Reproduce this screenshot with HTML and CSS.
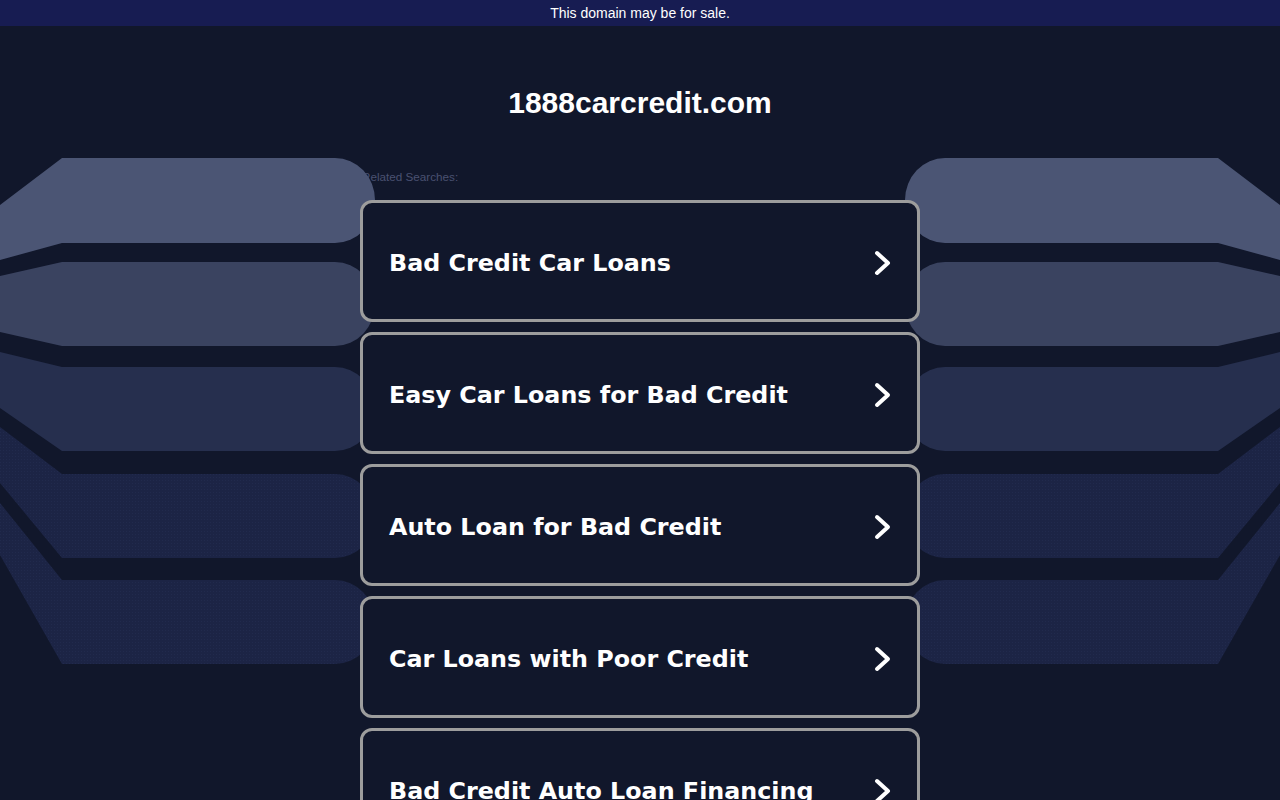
FILE: index.html
```html
<!DOCTYPE html>
<html lang="en">
<head>
<meta charset="utf-8">
<title>1888carcredit.com</title>
<link rel="stylesheet" href="styles.css">
</head>
<body>
<div class="topbar">This domain may be for sale.</div>
<h1 class="title">1888carcredit.com</h1>
<main class="stage">
  <section class="center">
    <p class="related">Related Searches:</p>
    <a class="card" href="#"><span>Bad Credit Car Loans</span><svg class="chev" viewBox="0 0 20 26"><polyline points="4,3 15,13 4,23"/></svg></a>
    <a class="card" href="#"><span>Easy Car Loans for Bad Credit</span><svg class="chev" viewBox="0 0 20 26"><polyline points="4,3 15,13 4,23"/></svg></a>
    <a class="card" href="#"><span>Auto Loan for Bad Credit</span><svg class="chev" viewBox="0 0 20 26"><polyline points="4,3 15,13 4,23"/></svg></a>
    <a class="card" href="#"><span>Car Loans with Poor Credit</span><svg class="chev" viewBox="0 0 20 26"><polyline points="4,3 15,13 4,23"/></svg></a>
    <a class="card" href="#"><span>Bad Credit Auto Loan Financing</span><svg class="chev" viewBox="0 0 20 26"><polyline points="4,3 15,13 4,23"/></svg></a>
  </section>
  <svg class="art art-left" viewBox="0 0 375 520" aria-hidden="true">
    <defs>
      <pattern id="dots" width="3" height="3" patternUnits="userSpaceOnUse">
        <rect width="3" height="3" fill="#1c2445"/>
        <rect width="1" height="1" fill="#212a4d"/>
      </pattern>
    </defs>
    <path fill="#4b5574" d="M0,55 L62,8 L335,8 A40,42 0 0 1 375,50 L375,51 A40,42 0 0 1 335,93 L62,93 L0,110 Z"/>
    <path fill="#3a4360" d="M0,126 L62,112 L335,112 A40,42 0 0 1 375,154 A40,42 0 0 1 335,196 L62,196 L0,182 Z"/>
    <path fill="#262f4e" d="M0,202 L62,217 L335,217 A40,42 0 0 1 375,259 A40,42 0 0 1 335,301 L62,301 L0,258 Z"/>
    <path fill="url(#dots)" d="M0,277 L62,324 L335,324 A40,42 0 0 1 375,366 A40,42 0 0 1 335,408 L62,408 L0,333 Z"/>
    <path fill="url(#dots)" d="M0,353 L62,430 L335,430 A40,42 0 0 1 375,472 A40,42 0 0 1 335,514 L62,514 L0,405 Z"/>
  </svg>
  <svg class="art art-right" viewBox="0 0 375 520" aria-hidden="true">
    <g transform="translate(375,0) scale(-1,1)">
      <path fill="#4b5574" d="M0,55 L62,8 L335,8 A40,42 0 0 1 375,50 L375,51 A40,42 0 0 1 335,93 L62,93 L0,110 Z"/>
      <path fill="#3a4360" d="M0,126 L62,112 L335,112 A40,42 0 0 1 375,154 A40,42 0 0 1 335,196 L62,196 L0,182 Z"/>
      <path fill="#262f4e" d="M0,202 L62,217 L335,217 A40,42 0 0 1 375,259 A40,42 0 0 1 335,301 L62,301 L0,258 Z"/>
      <path fill="url(#dots)" d="M0,277 L62,324 L335,324 A40,42 0 0 1 375,366 A40,42 0 0 1 335,408 L62,408 L0,333 Z"/>
      <path fill="url(#dots)" d="M0,353 L62,430 L335,430 A40,42 0 0 1 375,472 A40,42 0 0 1 335,514 L62,514 L0,405 Z"/>
    </g>
  </svg>
</main>
</body>
</html>
```
FILE: styles.css
```css
html, body {
  margin: 0;
  padding: 0;
}
body {
  background: #11172b;
  font-family: "Liberation Sans", Arial, sans-serif;
  color: #fff;
  overflow: hidden;
  height: 800px;
}
.topbar {
  height: 26px;
  line-height: 26px;
  background: #171c52;
  text-align: center;
  font-size: 14px;
  color: #fff;
}
.title {
  margin: 61px 0 0;
  font-size: 30px;
  line-height: 32px;
  font-weight: bold;
  text-align: center;
}
.stage {
  margin-top: 31px;
  display: grid;
  grid-template-columns: minmax(0, 1fr) 560px minmax(0, 1fr);
  align-items: start;
}
.center {
  grid-column: 2;
  grid-row: 1;
}
.art {
  display: block;
  width: 375px;
  height: 520px;
  grid-row: 1;
}
.art-left {
  grid-column: 1;
  margin-right: -15px;
}
.art-right {
  grid-column: 3;
  margin-left: -15px;
}
.related {
  margin: 20px 0 16px 2px;
  font-size: 11.7px;
  line-height: 14px;
  color: #4a5171;
}
.card {
  position: relative;
  z-index: 1;
  box-sizing: border-box;
  height: 122px;
  margin-bottom: 10px;
  border: 3px solid #9d9d9d;
  border-radius: 12px;
  background: #11172b;
  display: flex;
  align-items: center;
  justify-content: space-between;
  padding: 4px 24px 0 26px;
  color: #fff;
  text-decoration: none;
  font-family: "DejaVu Sans", Verdana, sans-serif;
  font-weight: bold;
  font-size: 23.8px;
}
.chev {
  width: 20px;
  height: 26px;
  flex: none;
}
.chev polyline {
  fill: none;
  stroke: #fff;
  stroke-width: 4;
  stroke-linecap: round;
  stroke-linejoin: round;
}
```
